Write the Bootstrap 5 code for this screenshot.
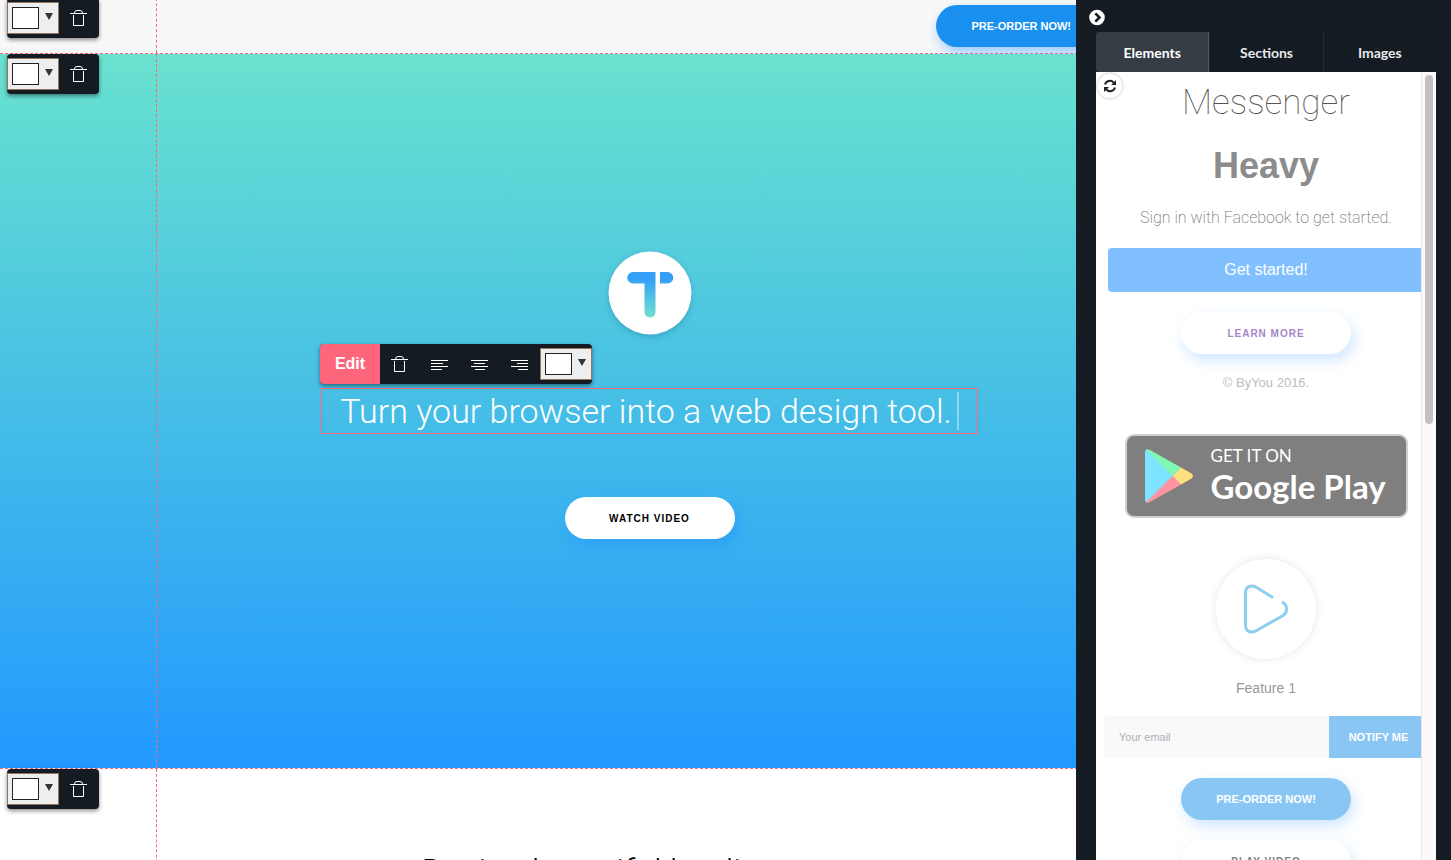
<!DOCTYPE html>
<html lang="en">
<head>
<meta charset="utf-8">
<meta name="viewport" content="width=device-width, initial-scale=1">
<title>Page builder</title>
<link href="https://cdn.jsdelivr.net/npm/bootstrap@5.3.0/dist/css/bootstrap.min.css" rel="stylesheet">
<style>
  :root { --ink: #151b23; --guide: #ff667b; --panel: 375px; }
  body { font-family: "Liberation Sans", Arial, sans-serif; background: #fff; }

  /* Canvas: the edited page runs on below the side panel */
  .workspace { height: 100vh; }
  .canvas { min-width: 0; }
  .page { width: calc(100% + 222px); }
  .strip { position: relative; }
  .strip-nav { background: #f8f8f8; border-bottom: 1px dashed var(--guide); margin-top: -2px; }
  .strip-hero { background: linear-gradient(#69e2cf, #2199ff); }
  .strip-intro { border-top: 1px dashed var(--guide); }
  .frame { width: 76%; border-left: 1px dashed var(--guide); }
  .strip-nav .frame { padding: 7px 36px 6px; }
  .strip-hero .frame { padding: 197px 0 229px; }
  .strip-intro .frame { padding: 80px 0 60px; }

  .tools { position: absolute; z-index: 2; height: 40px; background: var(--ink); border-radius: 4px; box-shadow: 0 2px 4px rgba(0,0,0,.45); overflow: hidden; }
  .tools-strip { top: 0; left: 7px; }
  .tools-text { bottom: 100%; left: -2px; margin-bottom: 5px; }
  .tool { width: 40px; height: 40px; padding: 0; border: 0; background: none; color: #fff; }
  .tool svg { display: block; margin: auto; }
  .tool-edit { width: 60px; background: var(--guide); font-size: 16px; font-weight: 700; }
  .swatch { width: 52px; height: 32px; padding: 0 4px; border: 1px solid #91765d; background: #eee; color: #333; }
  .swatch-chip { width: 27px; height: 22px; border: 1px solid #222; background: #fff; }
  .swatch-arrow { width: 8px; height: 7px; margin-left: 6px; margin-bottom: 3px; }

  .thin-title { font-family: Roboto, "Liberation Sans", sans-serif; font-weight: 300; font-size: 34px; line-height: 44px; }
  .logo { filter: drop-shadow(0 2px 3px rgba(0,60,110,.25)); }
  .editing { position: relative; width: 66.67%; margin-top: 53px; margin-bottom: 63px; border: 1px solid var(--guide); }
  .caret-bar { width: 2px; height: 38px; margin-left: 5px; background: rgba(255,255,255,.4); }

  .pill { width: 170px; height: 42px; padding: 0; border: 0; border-radius: 21px; font-size: 10px; font-weight: 700; letter-spacing: 1px; background: #fff; color: #000; box-shadow: 3px 6px 14px rgba(33,143,255,.45); }
  .pill-blue { background: #198fef; color: #fff; font-size: 11px; letter-spacing: 0; }

  /* Side panel */
  .panel { width: var(--panel); background: var(--ink); padding: 8px 15px 0 20px; position: relative; z-index: 3; }
  .collapse-btn { width: 18px; height: 18px; padding: 0; border: 0; background: none; margin: 0 0 6px -8px; line-height: 0; }
  .panel-tabs { font-family: Lato, sans-serif; font-size: 14px; height: 40px; }
  .panel-tabs button { flex: 1; border: 0; border-left: 1px solid #262c34; background: none; color: #e8e9ea; font-weight: 700; }
  .panel-tabs button.active { background: #363c44; color: #fff; border-left: 0; border-right: 1px solid #50565d; border-radius: 3px 0 0 3px; }
  .sheet { position: relative; background: #fff; min-height: 0; }
  .refresh-btn { position: absolute; z-index: 2; left: 0; top: 0; width: 28px; height: 28px; padding: 0; border: 2px solid #ebebeb; border-radius: 50%; background: #fff; line-height: 0; }
  .track { position: absolute; z-index: 2; top: 0; right: 0; bottom: 0; width: 15px; border-left: 1px solid #e8e8e8; background: #fafafa; padding: 3px; }
  .thumb { width: 8px; height: 349px; border-radius: 4px; background: #c1c1c1; }

  .name-thin { font-family: Roboto, sans-serif; font-weight: 100; font-size: 35px; line-height: 46px; color: #555; margin-top: 8px; }
  .name-heavy { font-size: 36px; font-weight: 700; line-height: 44px; color: #8c8c8c; margin: 18px 0 0; }
  .note { font-family: Roboto, sans-serif; font-weight: 200; font-size: 16px; line-height: 24px; color: #777; margin: 18px 0; }
  .start-btn { width: 316px; height: 44px; border: 0; border-radius: 4px; background: #80c0ff; color: #fff; font-size: 16px; margin-bottom: 20px; }
  .panel .pill { box-shadow: 3px 6px 14px rgba(33,143,255,.22); }
  .panel .pill-blue { background: #8ac6f4; }
  .pill-violet { color: #a587c8; }
  .pill-grey { color: #808080; }
  .copyright { font-size: 13px; line-height: 20px; color: #bdbdbd; margin: 19px 0 41px; }

  .store { width: 283px; height: 84px; padding: 0 18px; border: 2px solid #d0d0d0; border-radius: 9px; background: #7f7f7f; color: #fff; font-family: Lato, sans-serif; text-decoration: none; text-align: left; }
  .store:hover { color: #fff; }
  .store-small { font-size: 17px; line-height: 20px; }
  .store-big { font-size: 33px; line-height: 40px; font-weight: 700; }
  .feature-disc { width: 100px; height: 100px; margin-top: 41px; border-radius: 50%; box-shadow: 0 0 10px rgba(0,0,0,.1); }
  .feature-name { font-size: 14px; line-height: 22px; color: #999; margin: 18px 0 17px; }
  .signup { width: 324px; height: 42px; margin-bottom: 20px; }
  .signup input { width: 225px; padding: 0 15px; border: 0; border-radius: 4px 0 0 4px; background: #f8f9fb; font-size: 11px; }
  .signup input::placeholder { color: #b0b0b0; }
  .signup button { flex: 1; border: 0; background: #8ac6f4; color: #fff; font-size: 11px; font-weight: 700; }
  .pill-grey { margin: 20px 0; }
</style>
</head>
<body>
<svg class="d-none" aria-hidden="true">
  <symbol id="trash" viewBox="0 0 18 18"><path d="M0 4.500h17M3.500 6v10.500h10V6M4.500 4q0-2.500 2.500-2.500h3q2.500 0 2.500 2.500" fill="none" stroke="#fff"/></symbol>
</svg>

<div class="workspace d-flex overflow-hidden">
  <main class="canvas flex-grow-1 overflow-hidden">
    <div class="page">
      <section class="strip strip-nav">
        <div class="tools tools-strip d-flex align-items-center">
          <button class="swatch d-flex align-items-center" aria-label="Background colour"><span class="swatch-chip"></span><svg class="swatch-arrow" viewBox="0 0 8 7"><path d="M0 0h8L4 7z" fill="#333"/></svg></button>
          <button class="tool" aria-label="Delete"><svg width="18" height="18"><use href="#trash"/></svg></button>
        </div>
        <div class="frame mx-auto d-flex justify-content-end"><button class="pill pill-blue">PRE-ORDER NOW!</button></div>
      </section>

      <section class="strip strip-hero">
        <div class="tools tools-strip d-flex align-items-center">
          <button class="swatch d-flex align-items-center" aria-label="Background colour"><span class="swatch-chip"></span><svg class="swatch-arrow" viewBox="0 0 8 7"><path d="M0 0h8L4 7z" fill="#333"/></svg></button>
          <button class="tool" aria-label="Delete"><svg width="18" height="18"><use href="#trash"/></svg></button>
        </div>
        <div class="frame mx-auto d-flex flex-column align-items-center">
          <svg class="logo" width="84" height="84" viewBox="0 0 84 84" role="img" aria-label="Logo">
            <defs><linearGradient id="tee" x1="0" y1="20" x2="0" y2="67" gradientUnits="userSpaceOnUse"><stop offset=".15" stop-color="#359ff8"/><stop offset="1" stop-color="#70e3cd"/></linearGradient></defs>
            <circle cx="42" cy="42" r="41.500" fill="#fff"/>
            <path fill="url(#tee)" d="M25 21h22.500v40a5.500 5.500 0 0 1-11 0V32.500H25A5.750 5.750 0 0 1 25 21zM52 21h7.500a5.750 5.750 0 0 1 0 11.500H52z"/>
          </svg>
          <div class="editing">
            <div class="tools tools-text d-flex align-items-center">
              <button class="tool tool-edit">Edit</button>
              <button class="tool" aria-label="Delete"><svg width="18" height="18"><use href="#trash"/></svg></button>
              <button class="tool" aria-label="Align left"><svg width="18" height="12" viewBox="0 0 18 12"><path d="M0 2.500h17M0 5.500h12M0 8.500h17M0 11.500h11" stroke="#fff"/></svg></button>
              <button class="tool" aria-label="Align centre"><svg width="18" height="12" viewBox="0 0 18 12"><path d="M0 2.500h17M3 5.500h11M0 8.500h17M4 11.500h10" stroke="#fff"/></svg></button>
              <button class="tool" aria-label="Align right"><svg width="18" height="12" viewBox="0 0 18 12"><path d="M0 2.500h17M6 5.500h11M0 8.500h17M7 11.500h10" stroke="#fff"/></svg></button>
              <button class="swatch d-flex align-items-center" aria-label="Text colour"><span class="swatch-chip"></span><svg class="swatch-arrow" viewBox="0 0 8 7"><path d="M0 0h8L4 7z" fill="#333"/></svg></button>
            </div>
            <h1 class="thin-title text-white text-nowrap m-0 d-flex justify-content-center align-items-center">Turn your browser into a web design tool.<span class="caret-bar"></span></h1>
          </div>
          <button class="pill">WATCH VIDEO</button>
        </div>
      </section>

      <section class="strip strip-intro">
        <div class="tools tools-strip d-flex align-items-center">
          <button class="swatch d-flex align-items-center" aria-label="Background colour"><span class="swatch-chip"></span><svg class="swatch-arrow" viewBox="0 0 8 7"><path d="M0 0h8L4 7z" fill="#333"/></svg></button>
          <button class="tool" aria-label="Delete"><svg width="18" height="18"><use href="#trash"/></svg></button>
        </div>
        <div class="frame mx-auto text-center"><h2 class="thin-title m-0 text-black">Design beautiful landing pages</h2></div>
      </section>
    </div>
  </main>

  <aside class="panel flex-shrink-0 d-flex flex-column">
    <button class="collapse-btn" aria-label="Collapse panel"><svg width="18" height="18" viewBox="0 0 18 18"><circle cx="9" cy="9.500" r="7.800" fill="#fff"/><path d="M7.300 5.300l4.200 4.200-4.200 4.200" fill="none" stroke="#151b23" stroke-width="2.600"/></svg></button>
    <div class="panel-tabs d-flex flex-shrink-0" role="tablist">
      <button class="active" role="tab" aria-selected="true">Elements</button>
      <button role="tab" aria-selected="false">Sections</button>
      <button role="tab" aria-selected="false">Images</button>
    </div>
    <div class="sheet flex-grow-1 overflow-hidden">
      <button class="refresh-btn" aria-label="Refresh"><svg width="14" height="14" viewBox="0 0 14 14"><path d="M2 5.600A5 5 0 0 1 10.700 3.700M12 8.400A5 5 0 0 1 3.300 10.300" fill="none" stroke="#222" stroke-width="2"/><path d="M13 1v5H8zM1 13V8h5z" fill="#222"/></svg></button>
      <div class="track"><div class="thumb"></div></div>
      <div class="d-flex flex-column align-items-center">
        <h2 class="name-thin mb-0">Messenger</h2>
        <h2 class="name-heavy">Heavy</h2>
        <p class="note">Sign in with Facebook to get started.</p>
        <button class="start-btn">Get started!</button>
        <button class="pill pill-violet">LEARN MORE</button>
        <p class="copyright">© ByYou 2016.</p>
        <a href="#" class="store d-flex align-items-center">
          <svg width="50" height="54" viewBox="0 0 50 54" class="flex-shrink-0" aria-hidden="true">
            <path d="M0 3v48q0 3 3 2.500L28 27 3 .5Q0 0 0 3z" fill="#7fe4ff"/>
            <path d="M1 .8Q2.500 0 5 1l31 17.500-8.500 8.500z" fill="#80f7b5"/>
            <path d="M1 53.200q1.500.8 4-.2l31-17.500L27.500 27z" fill="#ff94a2"/>
            <path d="M36 18.500l10.500 6q3 2.500 0 5L36 35.500 27.500 27z" fill="#ffe080"/>
          </svg>
          <span class="d-flex flex-column ms-3 text-nowrap"><span class="store-small">GET IT ON</span><span class="store-big">Google Play</span></span>
        </a>
        <div class="feature-disc d-flex align-items-center justify-content-center">
          <svg width="46" height="52" viewBox="0 0 46 52" aria-hidden="true"><path d="M29 14L14 4.800Q10 2 6 3.500 2.500 5 2.500 10V42q0 5 3.500 6.500 4 1.500 8-1.200L40 32.500q4-3 3.500-7-.3-4-3.500-6" fill="none" stroke="#8ccfef" stroke-width="3" stroke-linecap="round"/></svg>
        </div>
        <p class="feature-name">Feature 1</p>
        <form class="signup d-flex"><input type="email" placeholder="Your email" aria-label="Your email"><button type="button">NOTIFY ME</button></form>
        <button class="pill pill-blue">PRE-ORDER NOW!</button>
        <button class="pill pill-grey">PLAY VIDEO</button>
      </div>
    </div>
  </aside>
</div>
<script src="https://cdn.jsdelivr.net/npm/bootstrap@5.3.0/dist/js/bootstrap.bundle.min.js"></script>
</body>
</html>
